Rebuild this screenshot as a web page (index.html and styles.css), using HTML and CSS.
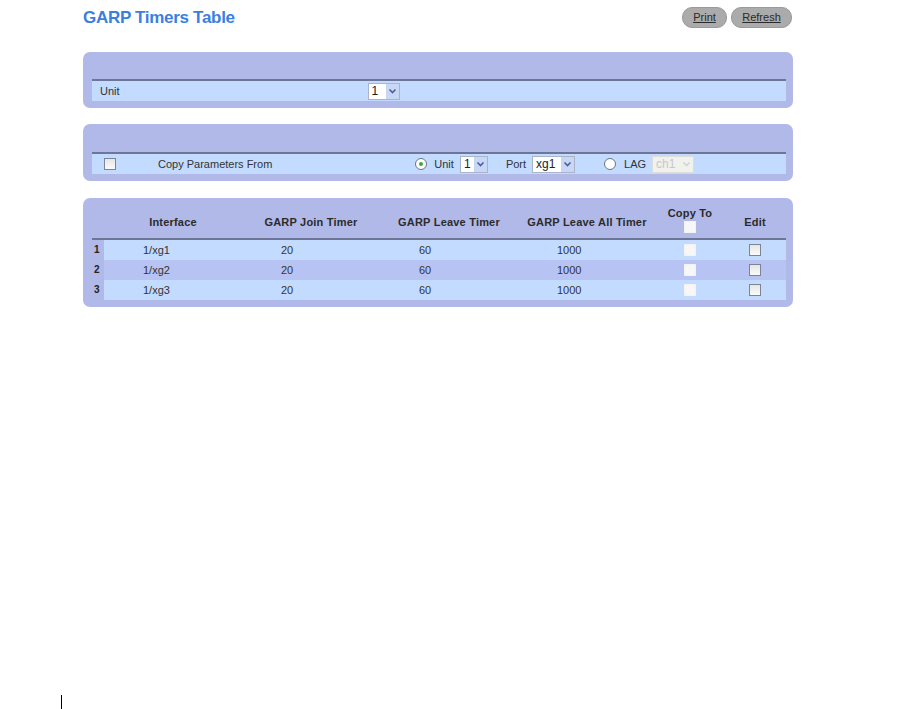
FILE: index.html
```html
<!DOCTYPE html>
<html>
<head>
<meta charset="utf-8">
<link rel="stylesheet" href="styles.css">
</head>
<body>
<div class="page">
  <div class="top">
    <h1 class="title">GARP Timers Table</h1>
    <div class="buttons">
      <span class="btn btn-print">Print</span>
      <span class="btn btn-refresh">Refresh</span>
    </div>
  </div>

  <div class="panel panel-unit">
    <div class="rows">
      <div class="row light unit-row">
        <span class="lbl unit-lbl">Unit</span>
        <span class="select sel-unit"><span class="val">1</span><span class="arrow"><svg width="9" height="6" viewBox="0 0 9 6"><path d="M1.5 1.5 L4.5 4.5 L7.5 1.5" fill="none" stroke="#4a5f9a" stroke-width="1.6"/></svg></span></span>
      </div>
    </div>
  </div>

  <div class="panel panel-copy">
    <div class="rows">
      <div class="row light copy-row">
        <span class="chk cb-copy"></span>
        <span class="lbl copy-lbl">Copy Parameters From</span>
        <span class="radio on r-unit"></span>
        <span class="lbl l-unit">Unit</span>
        <span class="select sel-unit2"><span class="val">1</span><span class="arrow"><svg width="9" height="6" viewBox="0 0 9 6"><path d="M1.5 1.5 L4.5 4.5 L7.5 1.5" fill="none" stroke="#4a5f9a" stroke-width="1.6"/></svg></span></span>
        <span class="lbl l-port">Port</span>
        <span class="select sel-port"><span class="val">xg1</span><span class="arrow"><svg width="9" height="6" viewBox="0 0 9 6"><path d="M1.5 1.5 L4.5 4.5 L7.5 1.5" fill="none" stroke="#4a5f9a" stroke-width="1.6"/></svg></span></span>
        <span class="radio r-lag"></span>
        <span class="lbl l-lag">LAG</span>
        <span class="select disabled sel-lag"><span class="val">ch1</span><span class="arrow"><svg width="9" height="6" viewBox="0 0 9 6"><path d="M1.5 1.5 L4.5 4.5 L7.5 1.5" fill="none" stroke="#d4d4d4" stroke-width="1.6"/></svg></span></span>
      </div>
    </div>
  </div>

  <div class="panel panel-table">
    <div class="thead">
      <div class="th num"></div>
      <div class="th">Interface</div>
      <div class="th">GARP Join Timer</div>
      <div class="th">GARP Leave Timer</div>
      <div class="th">GARP Leave All Timer</div>
      <div class="th copyto">Copy To<span class="chk dis"></span></div>
      <div class="th">Edit</div>
    </div>
    <div class="rows">
      <div class="trow light">
        <div class="td num">1</div>
        <div class="td">1/xg1</div>
        <div class="td">20</div>
        <div class="td">60</div>
        <div class="td">1000</div>
        <div class="td c"><span class="chk dis"></span></div>
        <div class="td c"><span class="chk"></span></div>
      </div>
      <div class="trow dark">
        <div class="td num">2</div>
        <div class="td">1/xg2</div>
        <div class="td">20</div>
        <div class="td">60</div>
        <div class="td">1000</div>
        <div class="td c"><span class="chk dis"></span></div>
        <div class="td c"><span class="chk"></span></div>
      </div>
      <div class="trow light">
        <div class="td num">3</div>
        <div class="td">1/xg3</div>
        <div class="td">20</div>
        <div class="td">60</div>
        <div class="td">1000</div>
        <div class="td c"><span class="chk dis"></span></div>
        <div class="td c"><span class="chk"></span></div>
      </div>
    </div>
  </div>
</div>
<div class="margin-mark"></div>
</body>
</html>
```

FILE: styles.css
```css
html, body {
  margin: 0;
  padding: 0;
  background: #ffffff;
  font-family: "Liberation Sans", Arial, sans-serif;
  font-size: 11px;
  color: #222;
}
.page {
  width: 710px;
  margin-left: 83px;
  padding-top: 7px;
}
.top {
  display: flex;
  justify-content: space-between;
  align-items: center;
  height: 20px;
}
.title {
  margin: 1px 0 0 0;
  font-size: 17px;
  font-weight: bold;
  color: #3b7fe0;
  letter-spacing: -0.3px;
}
.buttons {
  display: flex;
  gap: 4px;
  padding-right: 1px;
}
.btn {
  display: inline-flex;
  align-items: center;
  justify-content: center;
  height: 19px;
  border: 1px solid #9a9a9a;
  border-radius: 10px;
  background: #ababab;
  color: #2a2a2a;
  text-decoration: underline;
  font-size: 11px;
}
.btn-print { width: 43px; }
.btn-refresh { width: 59px; }

.panel {
  background: #b1b9e9;
  border-radius: 7px;
  padding: 27px 7px 7px 9px;
}
.panel-unit { margin-top: 25px; }
.panel-copy { margin-top: 16px; padding-top: 28px; }
.panel-table { margin-top: 17px; padding-top: 0; }

.rows {
  border-top: 2px solid #6e7698;
}
.row {
  height: 20px;
  display: flex;
  align-items: center;
  position: relative;
}
.light { background: #c2dbff; }
.dark { background: #b7c3f3; }

.lbl { color: #333; white-space: nowrap; }
.unit-lbl { margin-left: 8px; }

.select {
  display: inline-flex;
  align-items: center;
  justify-content: space-between;
  height: 17px;
  background: #fff;
  border: 1px solid #a9b4c8;
  box-sizing: border-box;
  font-size: 12px;
  color: #222;
}
.select .val { padding: 0 3px 0 3px; }
.select .arrow {
  width: 13px;
  height: 15px;
  background: #c9d7f7;
  display: inline-flex;
  align-items: center;
  justify-content: center;
}
.sel-unit { margin-left: 248px; width: 32px; }
.select.disabled { background: #f1f1ee; border-color: #dcdcdc; color: #c8c8c8; }
.select.disabled .arrow { background: #f1f1ee; }

.chk {
  display: inline-block;
  width: 10px;
  height: 10px;
  border: 1px solid #7b8596;
  background: linear-gradient(#e6e6e6, #fafafa);
}
.chk.dis {
  border-color: #f3f3f3;
  background: #f7f7f7;
}
.cb-copy { margin-left: 12px; }
.copy-lbl { margin-left: 42px; }
.radio {
  display: inline-block;
  width: 10px;
  height: 10px;
  border: 1px solid #6c7486;
  border-radius: 50%;
  background: #fff;
  position: relative;
  box-sizing: content-box;
}
.radio.on::after {
  content: "";
  position: absolute;
  left: 3px; top: 3px;
  width: 4px; height: 4px;
  border-radius: 50%;
  background: #3fa838;
}
.r-unit { margin-left: 143px; }
.l-unit { margin-left: 7px; }
.sel-unit2 { margin-left: 6px; width: 28px; }
.l-port { margin-left: 18px; }
.sel-port { margin-left: 6px; width: 43px; }
.r-lag { margin-left: 29px; }
.l-lag { margin-left: 8px; }
.sel-lag { margin-left: 6px; width: 42px; }

.thead, .trow {
  display: grid;
  grid-template-columns: 12px 138px 138px 138px 138px 68px 62px;
}
.thead { height: 40px; }
.th {
  font-weight: bold;
  text-align: center;
  padding-top: 17px;
  line-height: 14px;
  color: #2b2b2b;
  letter-spacing: 0.2px;
  white-space: nowrap;
}
.th.copyto {
  padding-top: 8px;
  display: flex;
  flex-direction: column;
  align-items: center;
}
.th.copyto .chk { margin-top: 1px; }
.trow { height: 20px; align-items: center; }
.td {
  padding-left: 39px;
  color: #333;
  line-height: 20px;
}
.td.num {
  background: #b1b9e9;
  padding-left: 2px;
  font-weight: bold;
  font-size: 10px;
  color: #222;
}
.td.c {
  padding-left: 0;
  display: flex;
  justify-content: center;
  align-items: center;
  height: 20px;
}
.margin-mark {
  position: absolute;
  left: 61px;
  top: 695px;
  width: 1px;
  height: 14px;
  background: #000;
}
```
